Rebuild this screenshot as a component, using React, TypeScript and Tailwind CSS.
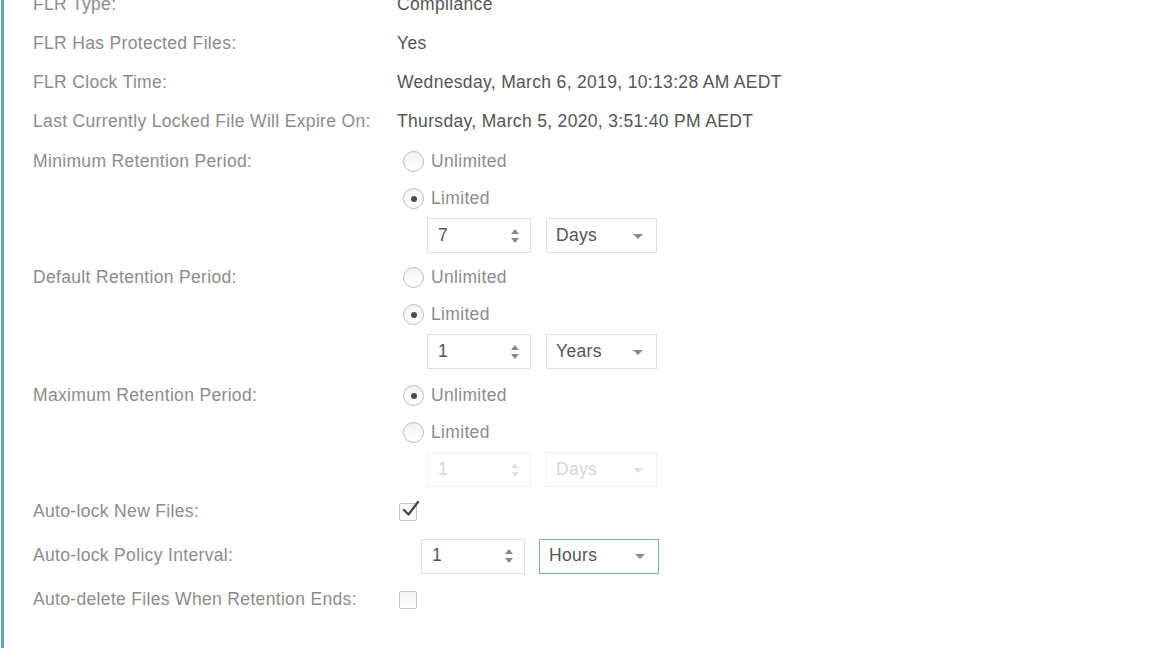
import { ReactNode } from 'react'

const font = { fontFamily: '"Liberation Sans", Arial, sans-serif' }

function Radio({ checked, label, disabled }: { checked?: boolean; label: string; disabled?: boolean }) {
  return (
    <div className="flex h-[37px] items-center">
      <span className={`ml-[6px] flex h-[21px] w-[21px] items-center justify-center rounded-full border ${disabled ? 'border-[#d8d8d8]' : 'border-[#bdbdbd]'} bg-gradient-to-b from-[#f2f2f2] to-white`}>
        {checked && <span className="h-[6px] w-[6px] rounded-full bg-[#4a4a4a]" />}
      </span>
      <span className="ml-[7px] text-[#8c8c8c]">{label}</span>
    </div>
  )
}

function Spinner({ value, disabled, indent = 'ml-[30px]' }: { value: string; disabled?: boolean; indent?: string }) {
  return (
    <div className={`${indent} flex h-[35px] w-[104px] items-center justify-between border ${disabled ? 'border-[#f0f0f0] text-[#d6d6d6]' : 'border-[#e0e0e0] text-[#555]'} pl-[10px] pr-[9px]`}>
      <span>{value}</span>
      <svg width="12" height="18" viewBox="0 0 12 18">
        <path d="M2 7 L6 2 L10 7 Z" fill={disabled ? '#e2e2e2' : '#8a8a8a'} />
        <path d="M2 11 L6 16 L10 11 Z" fill={disabled ? '#e2e2e2' : '#8a8a8a'} />
      </svg>
    </div>
  )
}

function Select({ value, disabled, focused, width = 'w-[111px]', gap = 'ml-[15px]' }: { value: string; disabled?: boolean; focused?: boolean; width?: string; gap?: string }) {
  const border = focused ? 'border-[#7aaed3]' : disabled ? 'border-[#f0f0f0]' : 'border-[#e0e0e0]'
  return (
    <div className={`${gap} ${width} flex h-[35px] items-center justify-between border ${border} ${disabled ? 'text-[#d6d6d6]' : 'text-[#555]'} pl-[9px] pr-[12px]`}>
      <span>{value}</span>
      <svg width="12" height="8" viewBox="0 0 12 8">
        <path d="M1 2 L11 2 L6 7 Z" fill={disabled ? '#e2e2e2' : '#8a8a8a'} />
      </svg>
    </div>
  )
}

function Row({ label, children, h = 'h-[39px]' }: { label: string; children?: ReactNode; h?: string }) {
  return (
    <div className={`flex ${h} items-center`}>
      <div className="w-[364px] shrink-0 text-[#8c8c8c]">{label}</div>
      <div className="flex items-center text-[#555]">{children}</div>
    </div>
  )
}

function RetentionGroup({ label, limited, value, unit, disabled, className }: { label: string; limited: boolean; value: string; unit: string; disabled?: boolean; className?: string }) {
  return (
    <div className={`flex ${className ?? ''}`}>
      <div className="flex h-[37px] w-[364px] shrink-0 items-center text-[#8c8c8c]">{label}</div>
      <div className="flex flex-col">
        <Radio label="Unlimited" checked={!limited} />
        <Radio label="Limited" checked={limited} />
        <div className="flex h-[37px] items-center">
          <Spinner value={value} disabled={disabled} />
          <Select value={unit} disabled={disabled} />
        </div>
      </div>
    </div>
  )
}

function Checkbox({ checked }: { checked?: boolean }) {
  return (
    <span className="relative ml-[2px] block h-[18px] w-[18px] rounded-[2px] border border-[#c4c4c4] bg-gradient-to-b from-[#f4f4f4] to-white">
      {checked && (
        <svg className="absolute -top-[5px] left-[1px]" width="20" height="20" viewBox="0 0 20 20">
          <path d="M3 11 L7.5 15.5 L17 3" stroke="#474747" strokeWidth="2.3" fill="none" strokeLinecap="round" strokeLinejoin="round" />
        </svg>
      )}
    </span>
  )
}

export default function App() {
  return (
    <div className="h-[663px] w-[1170px] overflow-hidden bg-white" style={font}>
      <div className="ml-[1px] h-full border-l-[3px] border-[#62a5b8] bg-white">
        <div className="-mt-[15px] pl-[29px] text-[17.5px] leading-none tracking-[0.33px]">
          <Row label="FLR Type:">Compliance</Row>
          <Row label="FLR Has Protected Files:">Yes</Row>
          <Row label="FLR Clock Time:">Wednesday, March 6, 2019, 10:13:28 AM AEDT</Row>
          <Row label="Last Currently Locked File Will Expire On:">Thursday, March 5, 2020, 3:51:40 PM AEDT</Row>
          <RetentionGroup className="mt-[2px] mb-[5px]" label="Minimum Retention Period:" limited value="7" unit="Days" />
          <RetentionGroup className="mb-[7px]" label="Default Retention Period:" limited value="1" unit="Years" />
          <RetentionGroup label="Maximum Retention Period:" limited={false} value="1" unit="Days" disabled />
          <div className="mt-[2px]">
            <Row label="Auto-lock New Files:" h="h-[44px]">
              <Checkbox checked />
            </Row>
            <Row label="Auto-lock Policy Interval:" h="h-[44px]">
              <Spinner value="1" indent="ml-[24px]" />
              <Select value="Hours" focused width="w-[120px]" gap="ml-[14px]" />
            </Row>
            <Row label="Auto-delete Files When Retention Ends:" h="h-[44px]">
              <Checkbox />
            </Row>
          </div>
        </div>
      </div>
    </div>
  )
}
